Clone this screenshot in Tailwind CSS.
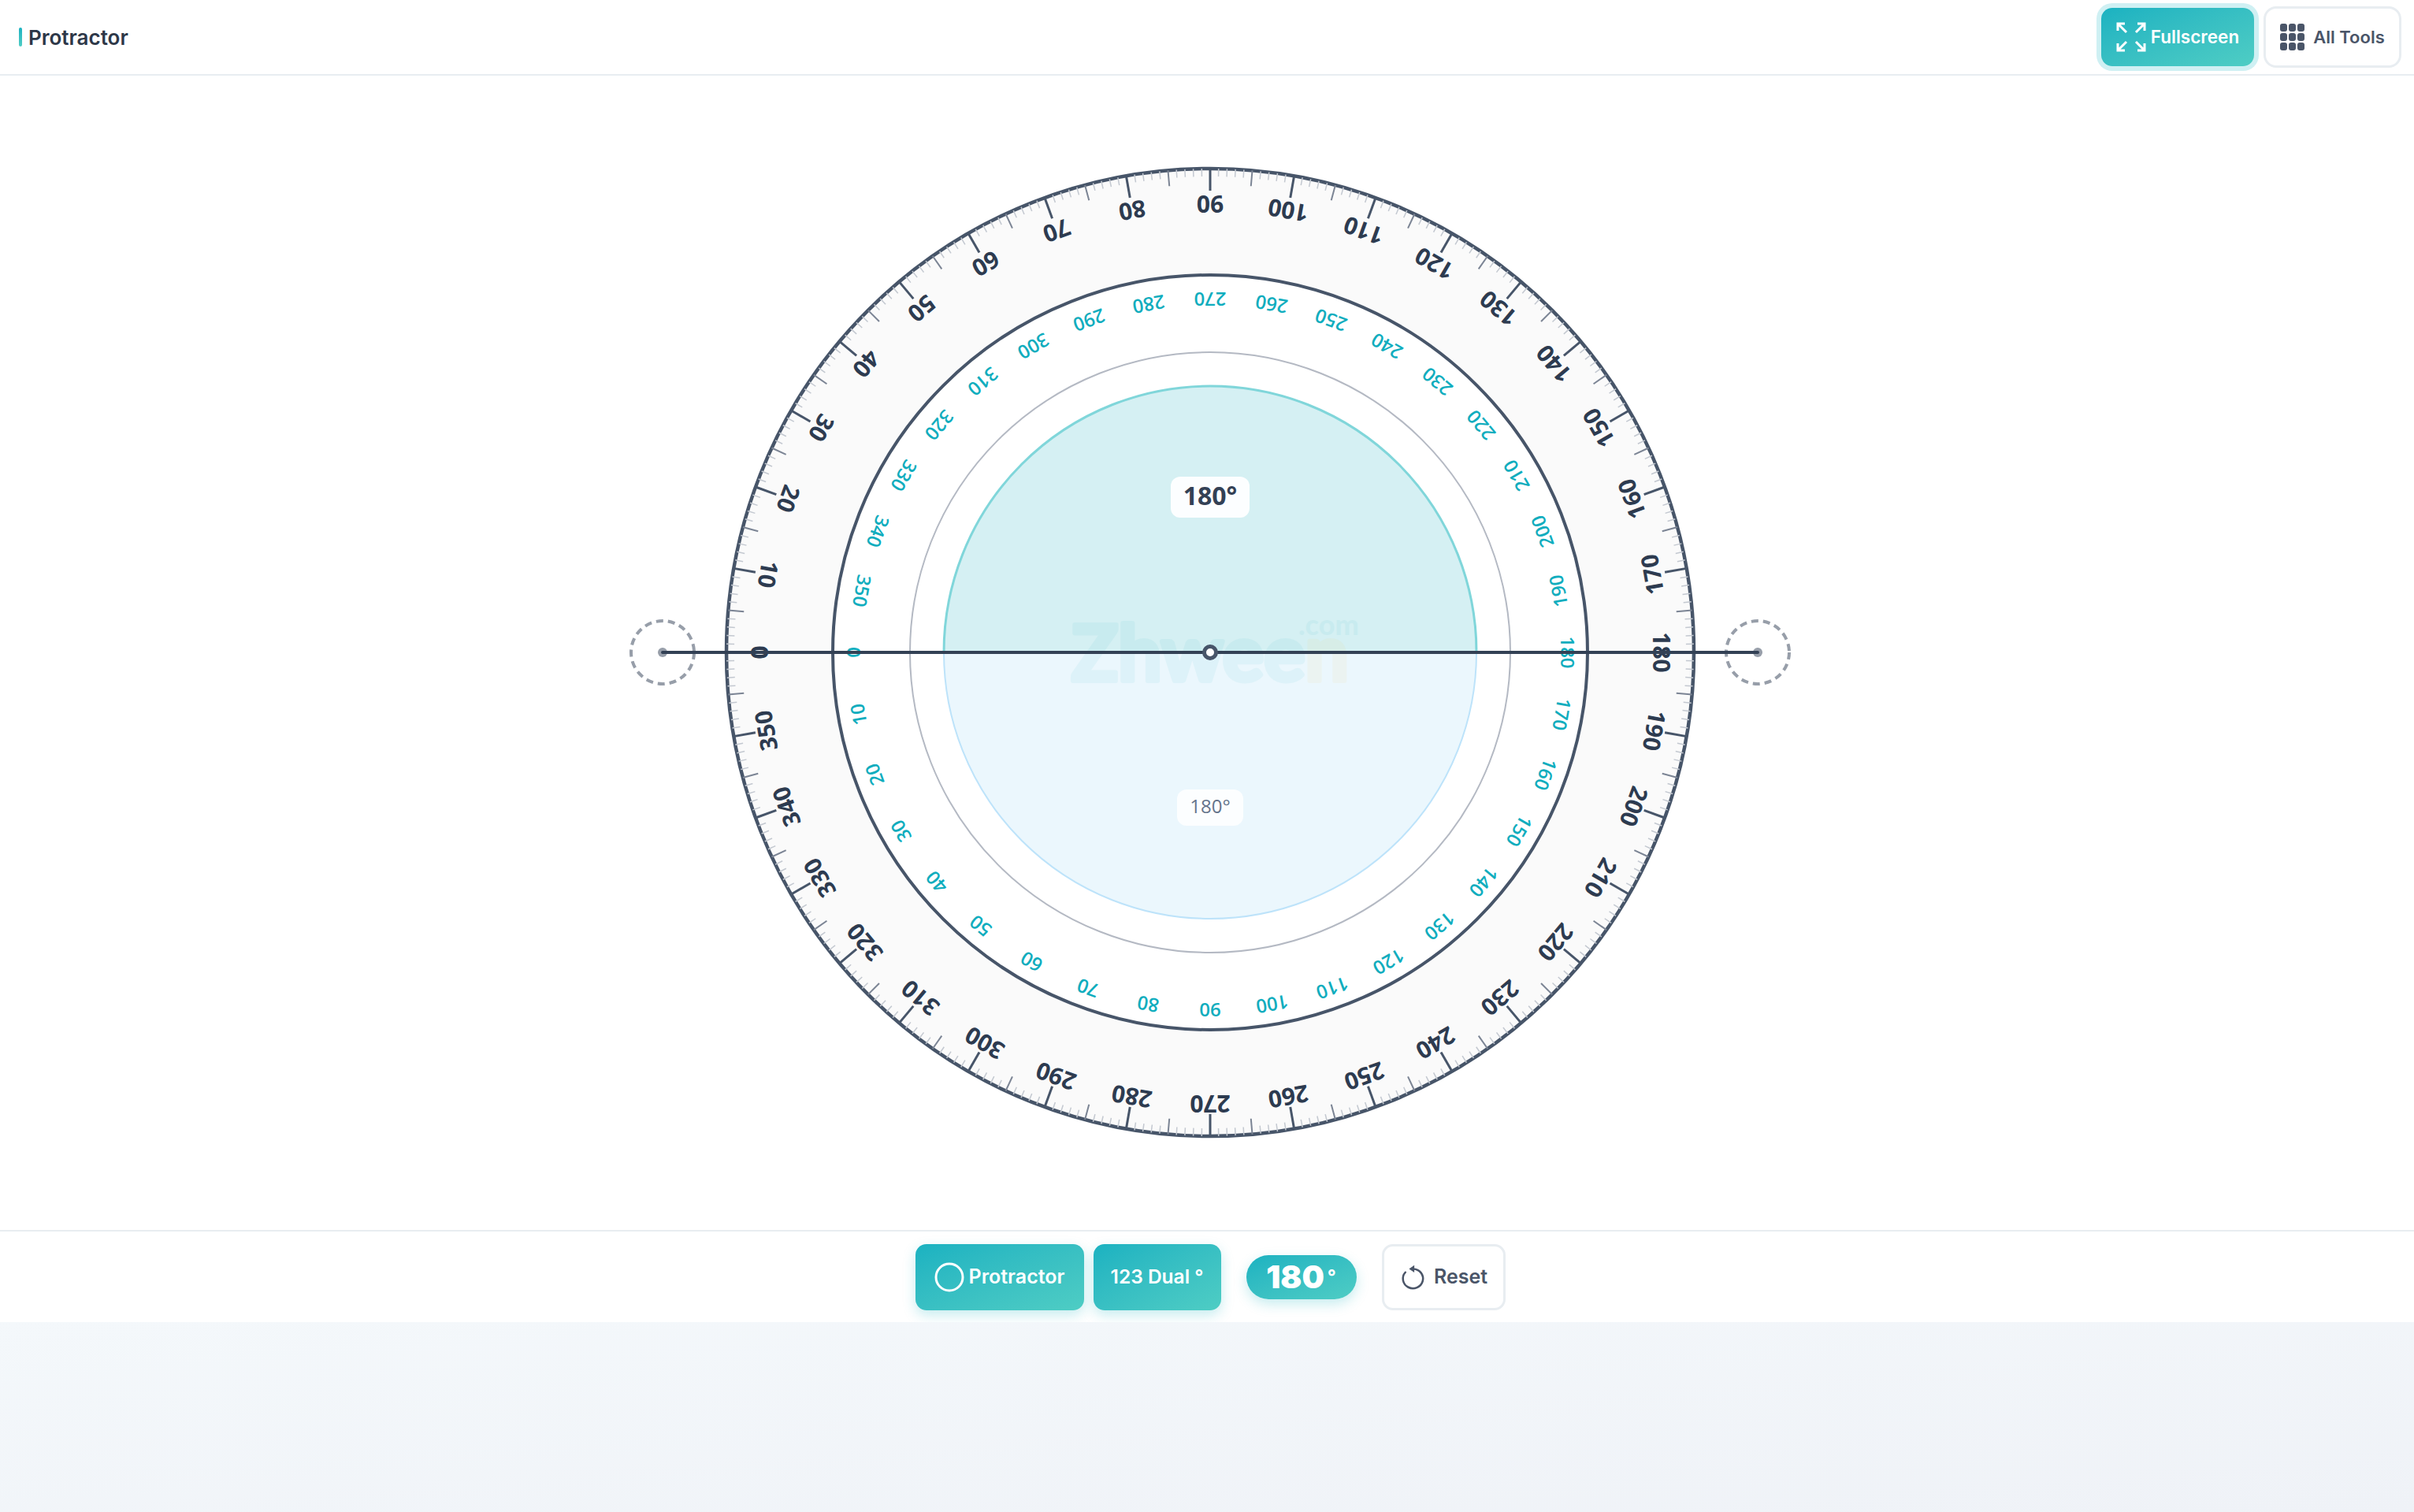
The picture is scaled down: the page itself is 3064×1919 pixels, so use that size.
<!DOCTYPE html>
<html lang="en">
<head>
  <meta charset="UTF-8" />
  <title>Protractor</title>
  <script src="https://cdn.jsdelivr.net/npm/@tailwindcss/browser@4"></script>
</head>
<body class="bg-white overflow-hidden font-['Inter',sans-serif]">
<div class="w-[3072px] h-[1919px] flex flex-col">

  <!-- Header -->
  <header class="h-[96px] shrink-0 border-b-2 border-[#e8edf1] px-6 flex items-center justify-between">
    <div class="flex items-center gap-2">
      <span class="w-1 h-6 rounded-sm bg-gradient-to-b from-[#1ab2c1] to-[#4ecdc4]"></span>
      <h1 class="text-[26px] font-semibold text-[#2d3748]">Protractor</h1>
    </div>
    <div class="flex items-center gap-3">
      <button class="w-[194px] h-[74px] rounded-[14px] bg-gradient-to-br from-[#1ab2c1] to-[#4ecdc4] ring-[6px] ring-[#cff0f3] flex items-center justify-center gap-[6px] text-white text-[22.5px] font-semibold">
        <svg width="38" height="38" viewBox="0 0 38 38" fill="none" stroke="white" stroke-width="3"><path d="M2 11V2h9M2 2l11 11M27 2h9v9M36 2L25 13M2 27v9h9M2 36l11-11M27 36h9v-9M36 36L25 25"/></svg>
        Fullscreen
      </button>
      <button class="w-[175px] h-[78px] rounded-2xl border-[3px] border-[#e8edf1] bg-white flex items-center justify-center gap-[11px] text-[#4a5568] text-[22px] font-semibold">
        <span class="grid grid-cols-3 gap-[2px]">
          <i class="w-[9px] h-[10px] rounded-[3px] bg-[#4a5568]"></i><i class="w-[9px] h-[10px] rounded-[3px] bg-[#4a5568]"></i><i class="w-[9px] h-[10px] rounded-[3px] bg-[#4a5568]"></i>
          <i class="w-[9px] h-[10px] rounded-[3px] bg-[#4a5568]"></i><i class="w-[9px] h-[10px] rounded-[3px] bg-[#4a5568]"></i><i class="w-[9px] h-[10px] rounded-[3px] bg-[#4a5568]"></i>
          <i class="w-[9px] h-[10px] rounded-[3px] bg-[#4a5568]"></i><i class="w-[9px] h-[10px] rounded-[3px] bg-[#4a5568]"></i><i class="w-[9px] h-[10px] rounded-[3px] bg-[#4a5568]"></i>
        </span>
        All Tools
      </button>
    </div>
  </header>

  <!-- Protractor -->
  <main class="h-[1465px] shrink-0 flex items-center justify-center">
    <svg id="dial" width="1500" height="1241" viewBox="-750 -620 1500 1241" class="overflow-visible"></svg>
  </main>

  <!-- Controls -->
  <div class="h-[117px] shrink-0 border-t-2 border-[#e8edf1] flex items-center justify-center">
    <button class="w-[214px] h-[84px] rounded-[14px] bg-gradient-to-br from-[#1ab2c1] to-[#4ecdc4] shadow-[0_6px_16px_rgba(26,178,193,0.25)] flex items-center justify-center gap-[6px] text-white text-[25px] font-semibold">
      <svg width="38" height="38" viewBox="0 0 38 38" fill="none" stroke="white" stroke-width="3"><circle cx="19" cy="19" r="17"/></svg>
      Protractor
    </button>
    <button class="w-[162px] h-[84px] ml-3 rounded-[14px] bg-gradient-to-br from-[#1ab2c1] to-[#4ecdc4] shadow-[0_6px_16px_rgba(26,178,193,0.25)] flex items-center justify-center text-white text-[24.5px] font-semibold">123 Dual °</button>
    <div class="w-[140px] h-14 ml-8 rounded-full bg-gradient-to-br from-[#1ab2c1] to-[#4ecdc4] shadow-[0_6px_16px_rgba(26,178,193,0.25)] flex items-center justify-center text-white text-[40px] font-black">180<span class="text-[24px] font-bold ml-1">°</span></div>
    <button class="w-[157px] h-[84px] ml-8 rounded-[14px] border-[3px] border-[#e8edf1] bg-white flex items-center justify-center gap-[10px] text-[#4a5568] text-[25px] font-semibold">
      <svg width="34" height="34" viewBox="0 0 24 24" fill="none" stroke="#4a5568" stroke-width="1.8" stroke-linecap="round"><path d="M12.5 4.6A9 8.7 0 1 1 5.5 7.6"/><path d="M13.5 1.2L8.8 4.6l4.7 3.2z" fill="#4a5568" stroke="none"/></svg>
      Reset
    </button>
  </div>

  <!-- Page background below the tool -->
  <div class="flex-1 bg-gradient-to-br from-[#f4f8fb] to-[#eff2f7]"></div>
</div>

<script>
  const R = 614, RI = 479, RG = 381, RS = 338;
  let svg = '';

  // position on the dial, a is degrees clockwise from the left
  function pt(a, r) {
    const t = a * Math.PI / 180;
    return [-r * Math.cos(t), -r * Math.sin(t)];
  }
  function labelAngle(a) {
    return a > 0 && a < 180 ? a + 90 : a - 90;
  }
  function label(a, r, text, size, weight, color, up) {
    const [x, y] = pt(a, r);
    const rot = labelAngle(a);
    return `<text x="${x}" y="${y}" dy="${-up}" transform="rotate(${rot} ${x} ${y})" text-anchor="middle" dominant-baseline="central" font-family="Open Sans" font-size="${size}" font-weight="${weight}" fill="${color}">${text}</text>`;
  }

  svg += `<circle r="${R}" fill="#fafafa" stroke="#475569" stroke-width="4.5"/>`;
  svg += `<circle r="${RI}" fill="#ffffff" stroke="#475569" stroke-width="4"/>`;
  svg += `<circle r="${RG}" fill="none" stroke="#b4b9c3" stroke-width="2"/>`;

  // tick marks
  for (let a = 0; a < 360; a++) {
    let len = 10, color = '#c3c8d0', w = 1.5;
    if (a % 10 === 0) { len = 28; color = '#475569'; w = 3; }
    else if (a % 5 === 0) { len = 20; color = '#7b8494'; w = 2; }
    const [x1, y1] = pt(a, R);
    const [x2, y2] = pt(a, R - len);
    svg += `<line x1="${x1}" y1="${y1}" x2="${x2}" y2="${y2}" stroke="${color}" stroke-width="${w}"/>`;
  }

  // outer and inner scales
  for (let a = 0; a < 360; a += 10) {
    svg += label(a, 571, a, 30, 700, '#2d3b50', 2);
    svg += label(a === 0 ? 0 : 360 - a, 451, a, 24, 600, '#10adbe', 3);
  }

  // angle sectors
  svg += `<path d="M${-RS} 0A${RS} ${RS} 0 0 1 ${RS} 0Z" fill="#d5f0f3" stroke="#80d6da" stroke-width="3"/>`;
  svg += `<path d="M${-RS} 0A${RS} ${RS} 0 0 0 ${RS} 0Z" fill="#ebf7fd" stroke="#bde3fa" stroke-width="2"/>`;

  // watermark
  svg += `<text x="-176" y="36" opacity="0.06" font-family="Lato" font-size="98" font-weight="700" fill="#14aebf" stroke="#14aebf" stroke-width="6" stroke-linejoin="round">Zhwee<tspan fill="#f5c542" stroke="#f5c542">n</tspan><tspan x="112" y="-22" font-size="36" font-weight="900" stroke="none" fill="#14aebf">.com</tspan></text>`;

  // value badges
  svg += `<rect x="-50" y="-223" width="100" height="52" rx="12" fill="#fcfeff"/>`;
  svg += `<text x="0" y="-187" text-anchor="middle" font-family="Open Sans" font-size="32" font-weight="700" fill="#334155">180°</text>`;
  svg += `<rect x="-42" y="174" width="84" height="46" rx="12" fill="#fcfeff"/>`;
  svg += `<text x="0" y="204" text-anchor="middle" font-family="Open Sans" font-size="24" fill="#64748b">180°</text>`;

  // arm and handles
  svg += `<circle cx="-695" r="40" fill="none" stroke="#979ea9" stroke-width="4" stroke-dasharray="9 6"/>`;
  svg += `<circle cx="695" r="40" fill="none" stroke="#979ea9" stroke-width="4" stroke-dasharray="9 6"/>`;
  svg += `<circle cx="-695" r="6" fill="#979ea9"/><circle cx="695" r="6" fill="#979ea9"/>`;
  svg += `<line x1="-695" x2="695" y1="0" y2="0" stroke="#334155" stroke-width="4" stroke-linecap="round"/>`;
  svg += `<circle r="7.5" fill="#ffffff" stroke="#475569" stroke-width="5"/>`;

  document.getElementById('dial').innerHTML = svg;
</script>
</body>
</html>
